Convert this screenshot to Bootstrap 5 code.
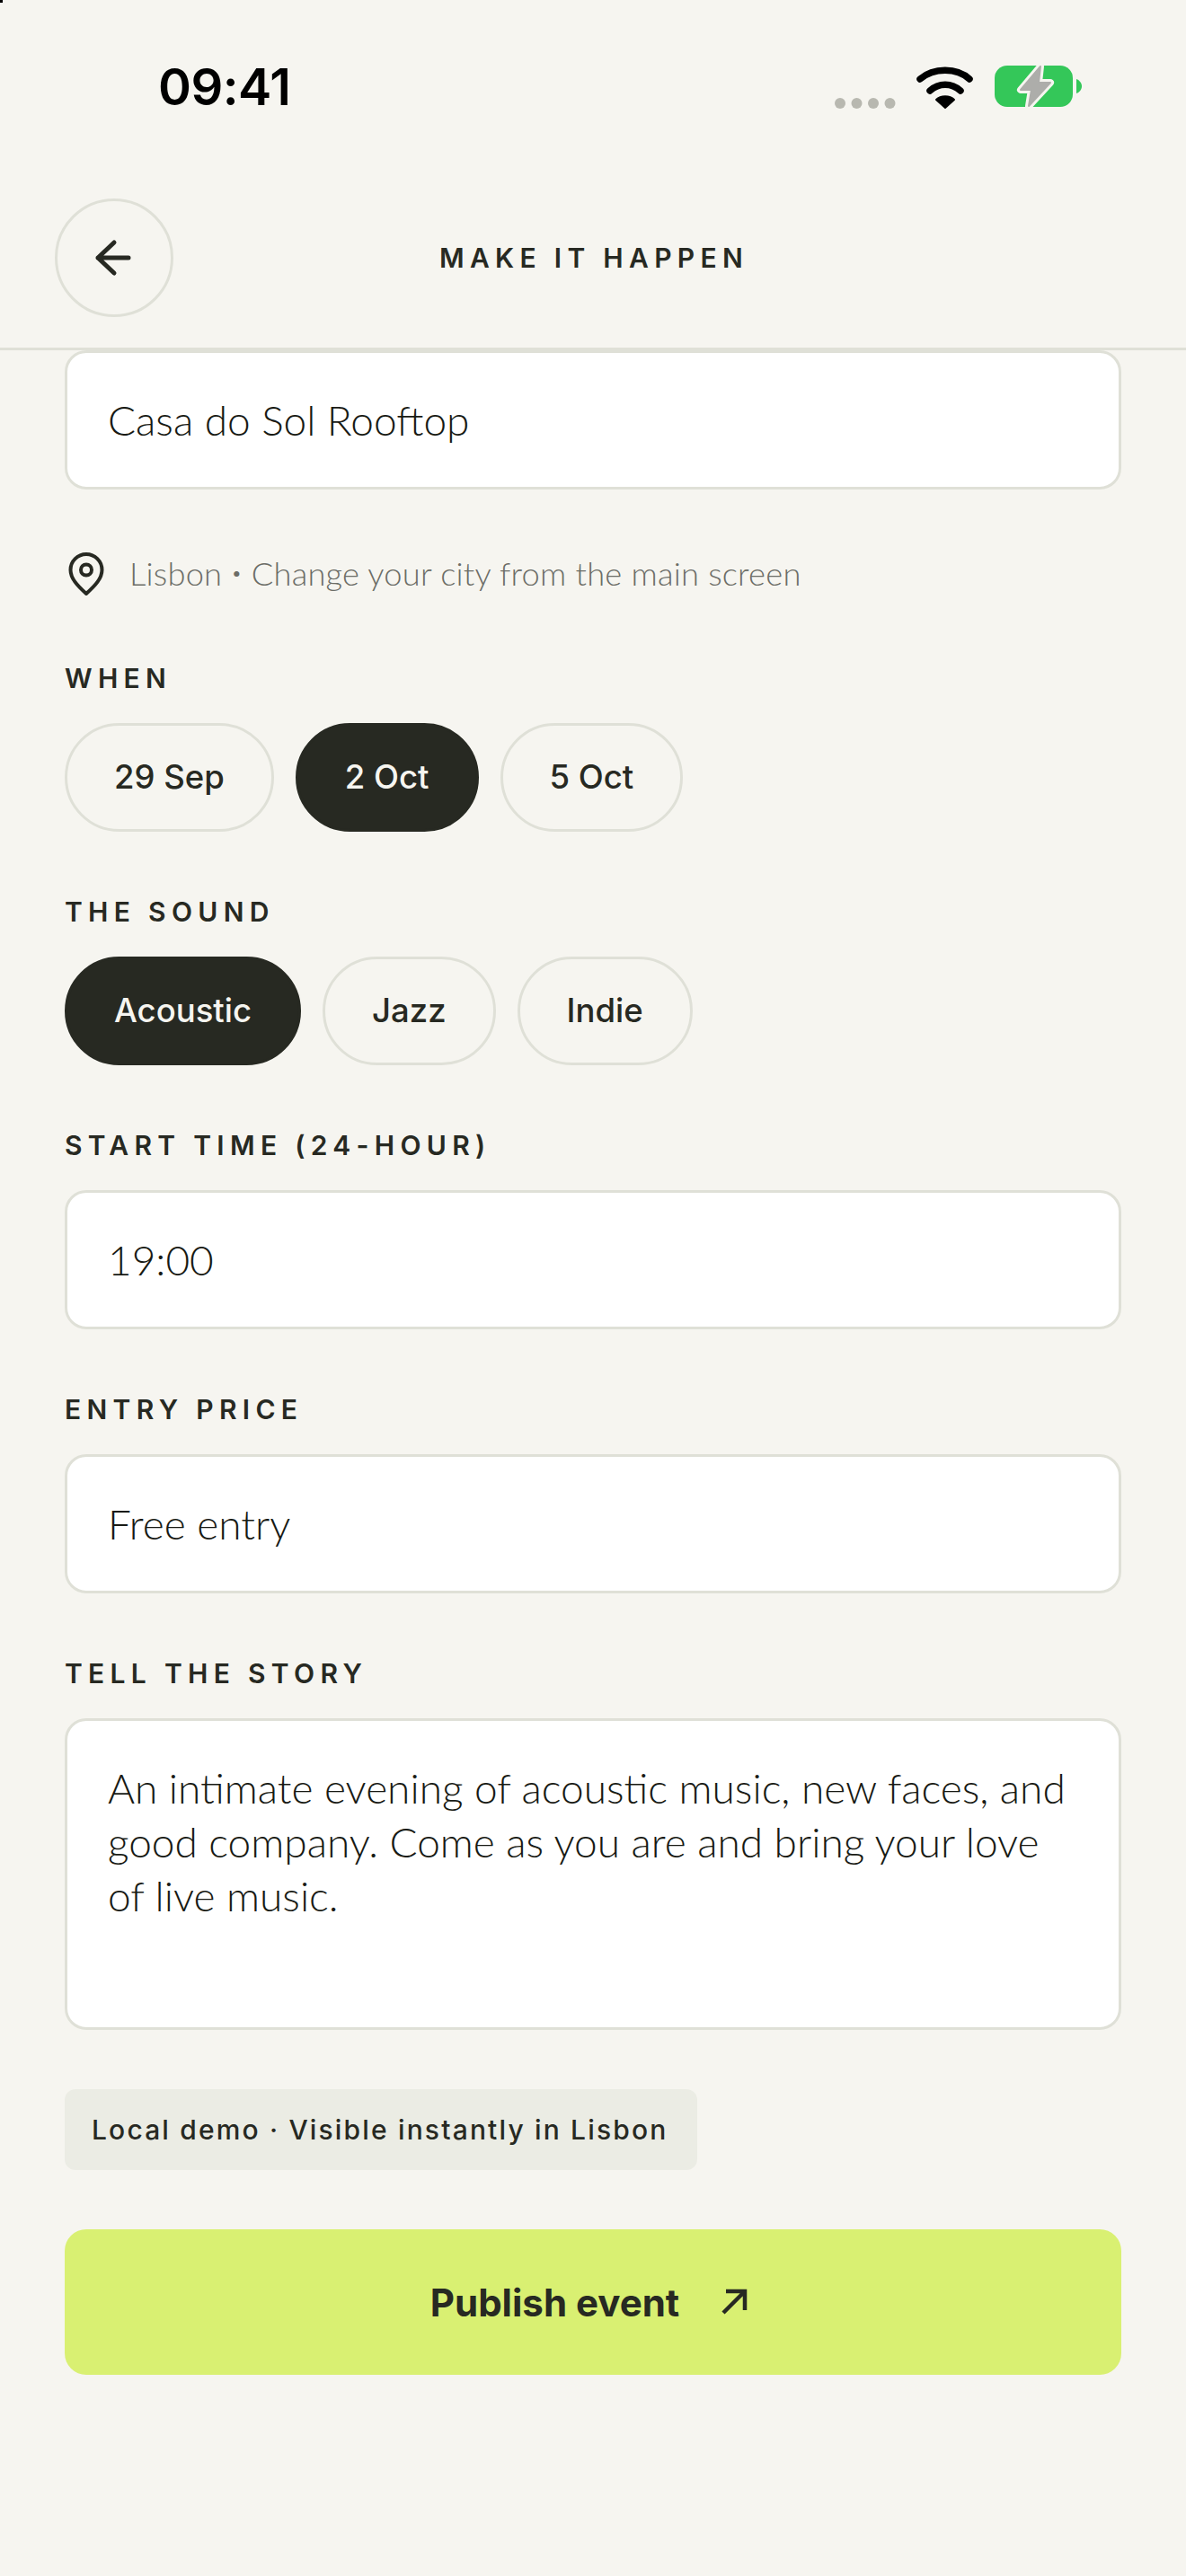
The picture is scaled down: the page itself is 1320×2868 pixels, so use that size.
<!DOCTYPE html>
<html lang="en">
<head>
<meta charset="UTF-8" />
<meta name="viewport" content="width=device-width, initial-scale=1.0" />
<title>Make it happen</title>
<link href="https://cdn.jsdelivr.net/npm/bootstrap@5.3.3/dist/css/bootstrap.min.css" rel="stylesheet" />
<style>
  html, body { background-color: #f6f5f0; }
  body { margin: 0; height: 2868px; overflow: hidden; font-family: Inter, sans-serif; color: #272922; }

  .corner-mark { position: absolute; top: 0; left: 0; width: 3px; height: 3px; background: #000; }

  .status-bar { height: 204px; padding: 66px 91px 0 176px; }
  .status-time { font-size: 56px; font-weight: 600; line-height: 62px; color: #000; letter-spacing: -0.5px; }
  .status-icons { height: 60px; }

  .top-bar { height: 186px; padding: 17px 61px 34px; border-bottom: 3px solid #dfe0d7; }
  .back-btn { width: 132px; height: 132px; border: 3px solid #dfe0d7; background: transparent; padding: 0; }
  .top-title { font-size: 30px; font-weight: 600; letter-spacing: 0.21em; flex: 1; text-align: center; margin-right: 130px; }

  .form-area { padding: 0 72px; }
  .field-input.form-control {
    height: 155px; padding: 0 45px; border: 3px solid #dfe0d7; border-radius: 24px; background: #fff;
    font-family: Lato, sans-serif; font-weight: 300; font-size: 46px; color: #181a14; box-shadow: none;
  }
  textarea.field-input.form-control { height: 347px; padding: 45px 45px 0; line-height: 60px; resize: none; }

  .city-note { margin-top: 70px; height: 48px; gap: 28px; padding-left: 4px; font-family: Lato, sans-serif; font-weight: 300; font-size: 36.3px; letter-spacing: 0.2px; color: #6c6d67; }
  .note-dot { font-family: Inter, sans-serif; font-weight: 700; }
  .field-label { display: block; margin: 0 0 33px; font-size: 30px; line-height: 34px; font-weight: 600; letter-spacing: 0.21em; }
  .field-group { margin-top: 72px; }
  .field-group.first-group { margin-top: 75px; }

  .choice-pill.btn { height: 121px; padding: 0 52px; border: 3px solid #dfe0d7; background: transparent; color: #272922; font-size: 36.5px; font-weight: 500; }
  .choice-pill.btn.picked { background: #272922; border-color: #272922; color: #f6f5f0; }
  .pill-row { gap: 24px; }

  .demo-note { margin-top: 66px; width: 704px; height: 90px; padding: 0 30px; background: #ebece4; border-radius: 12px; font-size: 30px; font-weight: 500; letter-spacing: 0.072em; white-space: nowrap; }
  .publish-btn.btn { margin-top: 66px; height: 162px; padding: 0 9px 0 0; background: #d9f072; border: 0; border-radius: 24px; color: #272922; font-size: 42px; font-weight: 700; gap: 46px; }
</style>
</head>
<body>
  <div class="corner-mark"></div>

  <div class="status-bar d-flex justify-content-between">
    <div class="status-time">09:41</div>
    <svg class="status-icons" width="300" height="60" viewBox="0 0 300 60" fill="none" xmlns="http://www.w3.org/2000/svg" aria-hidden="true">
      <g fill="#b8b8b0"><circle cx="6" cy="49" r="6"/><circle cx="24.500" cy="49" r="6"/><circle cx="43" cy="49" r="6"/><circle cx="61.500" cy="49" r="6"/></g>
      <path d="M95 22C110 9 136 9 150 22" stroke="#000" stroke-width="7.500" stroke-linecap="round"/>
      <path d="M106 35C116 26 130 26 140 35" stroke="#000" stroke-width="7.500" stroke-linecap="round"/>
      <path d="M113 45C118 40 128 40 133 45L123 54Z" fill="#000" stroke="#000" stroke-width="2" stroke-linejoin="round"/>
      <rect x="178" y="7" width="87" height="46" rx="14" fill="#34c759"/>
      <path d="M269 22c3 1 6 4 6 8s-3 7-6 8z" fill="#34c759"/>
      <path d="M229 8 207 34H219L216 52 240 26H227Z" fill="#f6f5f0" stroke="#f6f5f0" stroke-width="8" stroke-linejoin="round"/>
      <path d="M229 8 207 34H219L216 52 240 26H227Z" fill="#adadaa" stroke="#adadaa" stroke-width="2" stroke-linejoin="round"/>
    </svg>
  </div>

  <div class="top-bar d-flex align-items-center">
    <button class="back-btn btn rounded-circle d-flex align-items-center justify-content-center" type="button" aria-label="Back">
      <svg width="48" height="48" viewBox="0 0 48 48" fill="none" xmlns="http://www.w3.org/2000/svg"><path d="M40 24H6M24 7 6 24l18 17" stroke="#272922" stroke-width="5" stroke-linecap="round" stroke-linejoin="round"/></svg>
    </button>
    <div class="top-title">MAKE IT HAPPEN</div>
  </div>

  <form class="form-area">
    <input class="field-input form-control" type="text" value="Casa do Sol Rooftop" />

    <div class="city-note d-flex align-items-center">
      <svg width="40" height="48" viewBox="0 0 40 48" fill="none" xmlns="http://www.w3.org/2000/svg"><path d="M20 46C10 37 2.500 29 2.500 19.500a17.500 17.500 0 0 1 35 0C37.500 29 30 37 20 46Z" stroke="#272922" stroke-width="4" stroke-linejoin="round"/><circle cx="20" cy="19.500" r="6" stroke="#272922" stroke-width="4"/></svg>
      <span>Lisbon <span class="note-dot">·</span> Change your city from the main screen</span>
    </div>

    <div class="field-group first-group">
      <span class="field-label">WHEN</span>
      <div class="pill-row d-flex">
        <button class="choice-pill btn rounded-pill" type="button">29 Sep</button>
        <button class="choice-pill btn rounded-pill picked" type="button">2 Oct</button>
        <button class="choice-pill btn rounded-pill" type="button">5 Oct</button>
      </div>
    </div>

    <div class="field-group">
      <span class="field-label">THE SOUND</span>
      <div class="pill-row d-flex">
        <button class="choice-pill btn rounded-pill picked" type="button">Acoustic</button>
        <button class="choice-pill btn rounded-pill" type="button">Jazz</button>
        <button class="choice-pill btn rounded-pill" type="button">Indie</button>
      </div>
    </div>

    <div class="field-group">
      <label class="field-label">START TIME (24-HOUR)</label>
      <input class="field-input form-control" type="text" value="19:00" />
    </div>
    <div class="field-group">
      <label class="field-label">ENTRY PRICE</label>
      <input class="field-input form-control" type="text" value="Free entry" />
    </div>
    <div class="field-group">
      <label class="field-label">TELL THE STORY</label>
      <textarea class="field-input form-control">An intimate evening of acoustic music, new faces, and good company. Come as you are and bring your love of live music.</textarea>
    </div>

    <div class="demo-note d-flex align-items-center">Local demo · Visible instantly in Lisbon</div>
    <button class="publish-btn btn w-100 d-flex align-items-center justify-content-center" type="button">
      <span>Publish event</span>
      <svg width="30" height="30" viewBox="0 0 30 30" fill="none" xmlns="http://www.w3.org/2000/svg"><path d="M3 27 27 3M6 3h21v21" stroke="#272922" stroke-width="4.500"/></svg>
    </button>
  </form>
</body>
</html>
